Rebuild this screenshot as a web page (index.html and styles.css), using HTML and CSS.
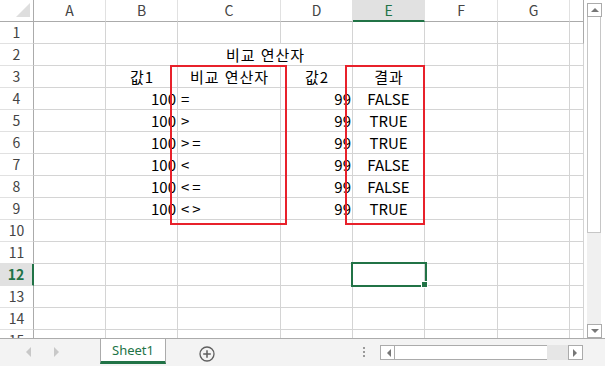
FILE: index.html
```html
<!DOCTYPE html>
<html lang="ko">
<head>
    <meta charset="UTF-8">
    <title>비교 연산자</title>
    <link rel="stylesheet" href="styles.css">
</head>
<body>
    <div class="app">
        <div class="main">
            <div class="sheet" id="sheet">
                <!-- cells are built below -->
                <div class="outline outline-ops"></div>
                <div class="outline outline-result"></div>
                <div class="selection"><span class="handle"></span></div>
            </div>
            <div class="vscroll">
                <div class="sbtn up"><span class="tri tri-up"></span></div>
                <div class="vthumb"></div>
                <div class="vtrack"></div>
                <div class="sbtn down"><span class="tri tri-down"></span></div>
            </div>
        </div>

        <div class="tabbar">
            <div class="nav">
                <span class="tri tri-left light"></span>
                <span class="tri tri-right light"></span>
            </div>
            <div class="tab">Sheet1</div>
            <div class="add">
                <svg width="16" height="16" viewBox="0 0 16 16">
                    <circle cx="8" cy="8" r="7" fill="none" stroke="#5f5f5f" stroke-width="1.3"/>
                    <path d="M8 4.2v7.6M4.2 8h7.6" stroke="#5f5f5f" stroke-width="1.5"/>
                </svg>
            </div>
            <div class="dots"><i></i><i></i><i></i></div>
            <div class="hscroll">
                <div class="sbtn left"><span class="tri tri-left"></span></div>
                <div class="hthumb"></div>
                <div class="htrack"></div>
                <div class="sbtn right"><span class="tri tri-right"></span></div>
            </div>
        </div>
    </div>

    <script>
        document.addEventListener('DOMContentLoaded', function() {
            const sheet = document.getElementById('sheet');
            const cols = ['A', 'B', 'C', 'D', 'E', 'F', 'G', 'H'];

            // row data: B, C, D, E
            const rows = {
                3: ['값1', '비교 연산자', '값2', '결과'],
                4: ['100', '=', '99', 'FALSE'],
                5: ['100', '>', '99', 'TRUE'],
                6: ['100', '>=', '99', 'TRUE'],
                7: ['100', '<', '99', 'FALSE'],
                8: ['100', '<=', '99', 'FALSE'],
                9: ['100', '<>', '99', 'TRUE']
            };

            function cell(cls, text) {
                const div = document.createElement('div');
                div.className = 'cell ' + cls;
                if (text) {
                    div.textContent = text;
                    if (/[가-힣]/.test(text)) div.classList.add('ko');
                }
                sheet.insertBefore(div, sheet.querySelector('.outline'));
                return div;
            }

            // header row
            const corner = cell('corner', '');
            corner.innerHTML = '<svg width="14" height="14" viewBox="0 0 14 14"><polygon points="14,0 14,14 0,14" fill="#dedede"/></svg>';
            cols.forEach(c => cell('colhead' + (c === 'E' ? ' active' : ''), c === 'H' ? '' : c));

            for (let r = 1; r <= 15; r++) {
                cell('rowhead' + (r === 12 ? ' active' : ''), String(r));

                if (r === 2) {
                    cell('', '');
                    cell('', '');
                    cell('merged center', '비교 연산자');
                    cell('', '');
                    cell('', '');
                    cell('', '');
                    cell('', '');
                    continue;
                }

                const data = rows[r];
                cols.forEach((c, i) => {
                    if (!data || i < 1 || i > 4) {
                        cell('', '');
                        return;
                    }
                    const text = data[i - 1];
                    let cls = 'center';
                    if (r > 3) {
                        if (c === 'B' || c === 'D') cls = 'right';
                        if (c === 'C') cls = 'left op';
                    }
                    cell(cls, text);
                });
            }
        });
    </script>
</body>
</html>
```

FILE: styles.css
```css
body {
    margin: 0;
    font-family: "Noto Sans CJK KR", sans-serif;
    background: #fff;
}
.app {
    width: 605px;
    height: 366px;
    overflow: hidden;
}
.main {
    display: flex;
    height: 338px;
}
.sheet {
    position: relative;
    display: grid;
    grid-template-columns: 34px 72px 72px 103px 72px 72px 73px 72px 14px;
    grid-auto-rows: 22px;
    width: 584px;
    height: 338px;
    overflow: hidden;
    align-content: start;
}
.cell {
    box-sizing: border-box;
    border-right: 1px solid #d4d4d4;
    border-bottom: 1px solid #d4d4d4;
    font-size: 15px;
    line-height: 21px;
    color: #000;
    padding: 0 2px;
    white-space: nowrap;
    overflow: visible;
}
.cell:nth-child(9n) {
    border-right-color: #ababab;
}
.cell.ko {
    letter-spacing: 1px;
    text-indent: 1px;
}
.corner {
    display: flex;
    align-items: flex-end;
    justify-content: flex-end;
    padding: 0 3px 4px 0;
    border-bottom-color: #ababab;
    border-right-color: #ababab;
}
.colhead {
    text-align: center;
    font-size: 14px;
    color: #444;
    border-right-color: #e1e1e1;
    border-bottom-color: #ababab;
}
.colhead.active {
    background: #e1e1e1;
    color: #217346;
    border-bottom: 2px solid #217346;
}
.rowhead {
    text-align: center;
    font-size: 14px;
    color: #444;
    border-right-color: #ababab;
    border-bottom-color: #e1e1e1;
}
.rowhead.active {
    background: #e1e1e1;
    color: #217346;
    font-weight: bold;
    border-right: 2px solid #217346;
}
.merged {
    grid-column: span 2;
}
.center {
    text-align: center;
}
.right {
    text-align: right;
    padding-right: 1px;
}
.left {
    text-align: left;
    padding-left: 3px;
}
.op {
    letter-spacing: 3px;
}
.outline {
    position: absolute;
    top: 65px;
    height: 160px;
    box-sizing: border-box;
    border: 2px solid #e8212b;
}
.outline-ops {
    left: 170px;
    width: 117px;
}
.outline-result {
    left: 345px;
    width: 80px;
}
.selection {
    position: absolute;
    left: 351px;
    top: 262px;
    width: 76px;
    height: 25px;
    box-sizing: border-box;
    border: 2px solid #217346;
}
.handle {
    position: absolute;
    right: -3px;
    bottom: -3px;
    width: 5px;
    height: 5px;
    background: #217346;
    border: 1px solid #fff;
}

/* scroll bars */
.vscroll {
    display: flex;
    flex-direction: column;
    margin-left: 3px;
    width: 14px;
    padding: 3px 4px 0 0;
}
.sbtn {
    box-sizing: border-box;
    width: 15px;
    height: 14px;
    border: 1px solid #ababab;
    background: #fff;
    display: flex;
    align-items: center;
    justify-content: center;
}
.vscroll .sbtn {
    width: 15px;
}
.vthumb {
    box-sizing: border-box;
    height: 216px;
    border: 1px solid #c6c6c6;
    border-top: none;
    background: #fff;
}
.vtrack {
    flex: 1;
    background: #f0f0f0;
}
.tri {
    width: 0;
    height: 0;
    border: 4px solid transparent;
}
.tri-up {
    border-bottom: 4px solid #777;
    border-top-width: 0;
}
.tri-down {
    border-top: 4px solid #777;
    border-bottom-width: 0;
}
.tri-left {
    border-right: 4px solid #777;
    border-left-width: 0;
}
.tri-right {
    border-left: 4px solid #777;
    border-right-width: 0;
}
.tri.light {
    border-width: 5px;
}
.tri-left.light {
    border-left-width: 0;
    border-right-color: #c8c8c8;
}
.tri-right.light {
    border-right-width: 0;
    border-left-color: #c8c8c8;
}

/* sheet tabs */
.tabbar {
    display: flex;
    align-items: flex-start;
    box-sizing: border-box;
    height: 28px;
    background: #f3f3f3;
    border-top: 1px solid #ababab;
}
.nav {
    display: flex;
    align-items: center;
    gap: 23px;
    width: 74px;
    height: 26px;
    padding-left: 26px;
}
.tab {
    box-sizing: border-box;
    width: 66px;
    height: 25px;
    background: #fff;
    border-left: 1px solid #ababab;
    border-right: 1px solid #ababab;
    border-bottom: 3px solid #217346;
    color: #217346;
    font-family: "Noto Sans", sans-serif;
    font-size: 13px;
    line-height: 22px;
    text-align: center;
}
.add {
    margin: 4px 0 0 33px;
}
.dots {
    display: flex;
    flex-direction: column;
    gap: 2px;
    margin: 8px 0 0 148px;
}
.dots i {
    width: 2px;
    height: 2px;
    background: #9a9a9a;
}
.hscroll {
    display: flex;
    margin: 6px 0 0 15px;
    width: 203px;
    height: 15px;
}
.hscroll .sbtn {
    height: 15px;
}
.hthumb {
    box-sizing: border-box;
    width: 152px;
    border-top: 1px solid #ababab;
    border-bottom: 1px solid #ababab;
    background: #fff;
}
.htrack {
    flex: 1;
    background: #e6e6e6;
}
```
